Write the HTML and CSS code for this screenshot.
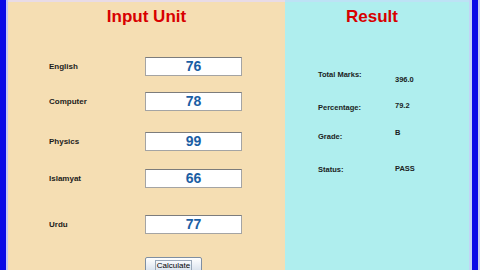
FILE: index.html
```html
<!DOCTYPE html>
<html lang="en">

<head>
    <meta charset="UTF-8">
    <meta name="viewport" content="width=device-width, initial-scale=1.0">
    <title>Student Result</title>
    <link rel="stylesheet" href="styles.css">
</head>

<body>
    <div class="frame-edge left-edge"></div>

    <div class="panel input-panel">
        <h1>Input Unit</h1>

        <div class="form">
            <div class="row">
                <label>English</label>
                <div class="field">76</div>
            </div>
            <div class="row">
                <label>Computer</label>
                <div class="field">78</div>
            </div>
            <div class="row">
                <label>Physics</label>
                <div class="field">99</div>
            </div>
            <div class="row">
                <label>Islamyat</label>
                <div class="field">66</div>
            </div>
            <div class="row">
                <label>Urdu</label>
                <div class="field">77</div>
            </div>
            <div class="actions">
                <button class="calc-btn"><span>Calculate</span></button>
            </div>
        </div>
    </div>

    <div class="panel result-panel">
        <h1>Result</h1>

        <div class="results">
            <div class="result-row">
                <span class="result-label">Total Marks:</span>
                <span class="result-value drop">396.0</span>
            </div>
            <div class="result-row">
                <span class="result-label">Percentage:</span>
                <span class="result-value lift-sm">79.2</span>
            </div>
            <div class="result-row">
                <span class="result-label">Grade:</span>
                <span class="result-value lift">B</span>
            </div>
            <div class="result-row">
                <span class="result-label">Status:</span>
                <span class="result-value lift-xs">PASS</span>
            </div>
        </div>
    </div>

    <div class="frame-edge right-edge"></div>
</body>

</html>
```

FILE: styles.css
```css
* {
    margin: 0;
    padding: 0;
    box-sizing: border-box;
    font-family: "Liberation Sans", Arial, sans-serif;
}

body {
    display: flex;
    width: 480px;
    height: 270px;
    overflow: hidden;
    background: #0a0ae6;
}

/* window border strips */
.frame-edge {
    flex: none;
    height: 100%;
}

.left-edge {
    width: 8px;
    background: #0a0ae6;
    border-right: 2px solid #c4c8f4;
}

.right-edge {
    width: 11px;
    background: #0a0ae6;
    border-left: 3px solid #c2d4f6;
    border-right: 2px solid #c8cdf0;
}

.panel {
    display: flex;
    flex-direction: column;
    height: 100%;
}

h1 {
    height: 30px;
    line-height: 30px;
    text-align: center;
    font-size: 17px;
    font-weight: bold;
    color: #d80000;
}

/* left side */
.input-panel {
    width: 277px;
    background: #f5deb3;
    border-top: 2px solid #e8dbe6;
}

.form {
    display: flex;
    flex-direction: column;
    padding-left: 41px;
}

.row {
    display: flex;
    align-items: center;
    height: 19px;
}

.row:nth-child(1) { margin-top: 25px; }
.row:nth-child(2) { margin-top: 16px; }
.row:nth-child(3) { margin-top: 21px; }
.row:nth-child(4) { margin-top: 18px; }
.row:nth-child(5) { margin-top: 27px; }

.row label {
    width: 96px;
    font-size: 8px;
    font-weight: bold;
    color: #1c1c1c;
}

.field {
    width: 97px;
    height: 19px;
    line-height: 17px;
    background: #fff;
    border: 1px solid #a4a4a4;
    border-top-color: #7c7c7c;
    text-align: center;
    font-size: 14px;
    font-weight: bold;
    color: #1a5ea4;
}

.actions {
    margin-top: 20px;
    padding-left: 96px;
}

.calc-btn {
    width: 57px;
    height: 17px;
    border: 1px solid #7f8fa2;
    border-radius: 2px;
    background: linear-gradient(to bottom, #ffffff, #e9eef5 50%, #d3dde9);
    font-size: 8px;
    color: #000;
}

.calc-btn span {
    padding: 0 1px;
    outline: 1px solid #99a7b8;
}

/* right side */
.result-panel {
    width: 184px;
    background: #afeeee;
    border-top: 2px solid #bde2f5;
}

.result-panel h1 {
    padding-right: 10px;
}

.results {
    display: flex;
    flex-direction: column;
    padding-left: 33px;
}

.result-row {
    display: flex;
    align-items: flex-start;
    height: 10px;
    line-height: 10px;
    font-size: 7.5px;
    font-weight: bold;
    color: #1a2222;
}

.result-row:nth-child(1) { margin-top: 38px; }
.result-row:nth-child(2) { margin-top: 23px; }
.result-row:nth-child(3) { margin-top: 19px; }
.result-row:nth-child(4) { margin-top: 23px; }

.result-label {
    width: 77px;
}

.drop { margin-top: 5px; }
.lift-sm { margin-top: -2px; }
.lift { margin-top: -4px; }
.lift-xs { margin-top: -1px; }
```
